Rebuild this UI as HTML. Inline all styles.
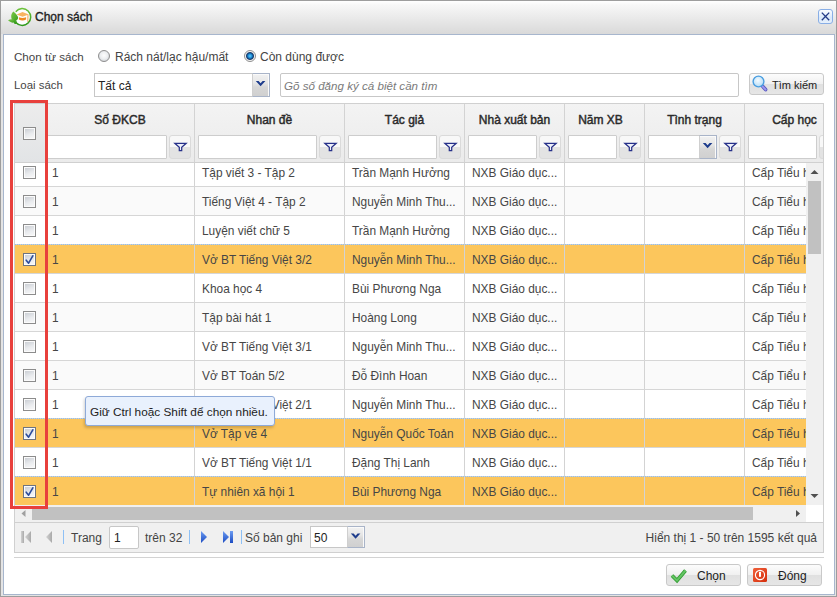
<!DOCTYPE html>
<html><head><meta charset="utf-8">
<style>
*{box-sizing:border-box;}
html,body{margin:0;padding:0;width:837px;height:597px;overflow:hidden;background:#fff;}
body{font-family:"Liberation Sans",sans-serif;font-size:12px;color:#444;position:relative;}
.a{position:absolute;}
.t{position:absolute;white-space:nowrap;line-height:14px;}
#frame{left:0;top:0;width:837px;height:597px;border:1px solid #9d9d9d;background:#e4e4e4;}
#titlebar{left:1px;top:1px;width:835px;height:33px;background:linear-gradient(#ffffff,#f7f7f7 12%,#ececec 45%,#e0e0e0 80%,#d9d9d9);}
#panel{left:3px;top:34px;width:832px;height:561px;border:1px solid #a7b6cd;background:#fff;}
.radio{position:absolute;width:13px;height:13px;border-radius:50%;border:1px solid #8c8c8c;background:radial-gradient(circle at 50% 40%,#fdfdfd,#d8dbe0 80%);}
.inp{position:absolute;border:1px solid #c7c7c7;background:#fff;border-radius:2px;}
.trig{position:absolute;border:1px solid #a9b4c8;border-left-color:#cfcfcf;background:linear-gradient(#f2f2f2,#e6e6e6 40%,#d6d6d6 60%,#d0d0d0);box-shadow:inset -1px 1px 0 #fafafa;}
.btn{position:absolute;border:1px solid #c9c9c9;border-radius:3px;background:linear-gradient(#fcfcfc,#f0f0f0 50%,#e0e0e0 51%,#e6e6e6);}
.hc{position:absolute;top:104px;height:58px;background:linear-gradient(#f3f3f3,#ebebeb);}
.hc0{background:linear-gradient(#ececec,#e2e4e6);}
.vb{width:1px;background:#d3d3d3;}
.ht{position:absolute;top:113px;text-align:center;font-weight:normal;font-size:12px;line-height:14px;color:#2a2a2a;-webkit-text-stroke:0.45px #2a2a2a;white-space:nowrap;}
.fi{position:absolute;top:135px;height:24px;border:1px solid #cdcdcd;background:#fff;border-radius:1px;}
.fbtn{position:absolute;top:135px;width:22px;height:24px;border:1px solid #dadada;border-radius:3px;background:linear-gradient(#f8f8f8 50%,#e3e3e3 50%);}
.row{position:absolute;left:0;width:791px;height:29px;border-bottom:1px solid #d6d6d6;}
.dot{height:1px;background:repeating-linear-gradient(90deg,#93bdf0 0 1px,#d7d3c0 1px 2px);}
.ct{position:absolute;white-space:nowrap;font-size:11.9px;line-height:14px;color:#464646;}
.cb{position:absolute;width:13px;height:13px;border:1px solid #8c8c8c;background:linear-gradient(160deg,#c6cad0,#e9ebee 55%,#fafafa);}
.cb:after{content:"";position:absolute;left:0;top:0;right:0;bottom:0;border:1px solid #fbfbfb;}
.ck{border-color:#6e7480;}

</style></head><body>
<div id="frame" class="a"></div>
<div id="titlebar" class="a"></div>
<svg class="a" style="left:5px;top:5px" width="30" height="24" viewBox="5 5 30 24">
  <defs>
    <linearGradient id="ring" x1="0" y1="0" x2="0" y2="1"><stop offset="0" stop-color="#6cc23a"/><stop offset="1" stop-color="#2f9a1c"/></linearGradient>
    <linearGradient id="leaf" x1="0" y1="0" x2="1" y2="1"><stop offset="0" stop-color="#7cc948"/><stop offset="1" stop-color="#3a9e1e"/></linearGradient>
  </defs>
  <path d="M15.85 11.78 A8.3 8.3 0 1 1 15.67 22.0" fill="none" stroke="url(#ring)" stroke-width="1.7"/>
  <circle cx="22.3" cy="17" r="7.4" fill="#fff" opacity="0.9"/>
  <path d="M13.4 11.4 C10.6 14.2 10.2 18.4 13.6 21.8 C16.8 20.8 18.6 18.8 18 17 C17.2 14.8 15.2 12.8 13.4 11.4Z" fill="url(#leaf)"/>
  <path d="M8 20.3 C10.5 18.6 13.5 18.8 15.8 21 C14.5 23.2 11.5 23.6 8 20.3Z" fill="url(#leaf)"/>
  <path d="M13.5 21.5 L16.5 21 L17 24 L14.5 24Z" fill="#3a9e1e"/>
  <path d="M13.5 21.5 C14.5 18.5 16.5 17.5 18 17.5 C17.5 19.5 16 21 13.5 21.8Z" fill="#4aa82a"/>
  <path d="M16.6 14.4 L22.5 12 L28.9 14.4 L22.5 16.7Z" fill="#f8b462"/>
  <path d="M18.9 17.3 Q22.5 18.8 26.1 17.3 L26.1 19.6 Q22.5 21.6 18.9 19.6Z" fill="#f08a22"/>
  <path d="M28 14.8 L27.8 21.8" stroke="#f39a40" stroke-width="0.9"/>
</svg>
<div class="t" style="left:35px;top:10px;font-size:12px;color:#1e1e1e;-webkit-text-stroke:0.35px #1e1e1e;">Chọn sách</div>
<div class="a" style="left:818px;top:9px;width:15px;height:15px;border:1px solid #88aee6;border-radius:3px;background:linear-gradient(#fbfdff,#d9e8fa 60%,#e6f0fc);"></div>
<svg class="a" style="left:818px;top:9px" width="15" height="15" viewBox="0 0 15 15"><path d="M3.8 3.6 L11.2 11.2 M11.2 3.6 L3.8 11.2" stroke="#223a86" stroke-width="1.35"/></svg>
<div id="panel" class="a"></div>
<div class="t" style="left:14px;top:50px;font-size:11.6px;">Chọn từ sách</div>
<svg class="a" style="left:98px;top:50px" width="12" height="12" viewBox="0 0 12 12"><defs><radialGradient id="rad" cx="0.5" cy="0.45" r="0.55"><stop offset="0" stop-color="#fdfdfd"/><stop offset="0.6" stop-color="#eceef0"/><stop offset="1" stop-color="#cfd2d6"/></radialGradient></defs><circle cx="6" cy="6" r="5.5" fill="url(#rad)" stroke="#8f8f8f" stroke-width="1"/></svg>
<div class="t" style="left:115px;top:50px;">Rách nát/lạc hậu/mất</div>
<svg class="a" style="left:244px;top:50px" width="12" height="12" viewBox="0 0 12 12"><defs><radialGradient id="dotg" cx="0.5" cy="0.5" r="0.5"><stop offset="0" stop-color="#6ad2ff"/><stop offset="0.55" stop-color="#1c8ad4"/><stop offset="1" stop-color="#0c3f78"/></radialGradient></defs><circle cx="6" cy="6" r="5.5" fill="#f6f6f6" stroke="#8f8f8f" stroke-width="1"/><circle cx="6" cy="6" r="3.6" fill="url(#dotg)" stroke="#173766" stroke-width="0.9"/></svg>
<div class="t" style="left:260px;top:50px;">Còn dùng được</div>
<div class="t" style="left:14px;top:78px;font-size:11.4px;">Loại sách</div>
<div class="inp" style="left:94px;top:73px;width:176px;height:24px;border-radius:0;"></div>
<div class="t" style="left:98px;top:79px;color:#222;">Tất cả</div>
<div class="trig" style="left:252px;top:73px;width:18px;height:24px;"></div>
<svg class="a" style="left:252px;top:73px" width="18" height="24"><path d="M3.8 8 L6.6 8 L8.6 10.2 L10.6 8 L13.4 8 L8.6 13.2 Z" fill="#1d3c8c"/></svg>
<div class="inp" style="left:280px;top:73px;width:459px;height:24px;"></div>
<div class="t" style="left:284px;top:79px;font-style:italic;color:#7a7a7a;font-size:11.6px;">Gõ số đăng ký cá biệt cần tìm</div>
<div class="btn" style="left:749px;top:73px;width:75px;height:22px;"></div>
<svg class="a" style="left:751px;top:74px" width="18" height="20" viewBox="0 0 18 20">
  <defs><radialGradient id="lens" cx="0.45" cy="0.4" r="0.6"><stop offset="0" stop-color="#f4fbff"/><stop offset="1" stop-color="#b5dcf6"/></radialGradient></defs>
  <path d="M11.8 12.6 L14.6 15.6" stroke="#5a58c0" stroke-width="3.6" stroke-linecap="round"/>
  <path d="M11.8 12.6 L14.6 15.6" stroke="#9a98f0" stroke-width="2" stroke-linecap="round"/>
  <circle cx="7.5" cy="7.5" r="5.4" fill="url(#lens)" stroke="#4a9ee0" stroke-width="1.4"/>
</svg>
<div class="t" style="left:772px;top:78px;color:#222;font-size:11px;">Tìm kiếm</div>
<div class="a" style="left:14px;top:103px;width:810px;height:420px;border:1px solid #d0d0d0;background:#fff;"></div>
<div class="a" style="left:0;top:0;width:823px;height:597px;overflow:hidden;">
<div class="hc hc0" style="left:15px;width:30px;"></div>
<div class="a vb" style="left:45px;top:104px;height:58px;"></div>
<div class="hc" style="left:46px;width:148px;"></div>
<div class="a vb" style="left:194px;top:104px;height:58px;"></div>
<div class="hc" style="left:195px;width:149px;"></div>
<div class="a vb" style="left:344px;top:104px;height:58px;"></div>
<div class="hc" style="left:345px;width:119px;"></div>
<div class="a vb" style="left:464px;top:104px;height:58px;"></div>
<div class="hc" style="left:465px;width:99px;"></div>
<div class="a vb" style="left:564px;top:104px;height:58px;"></div>
<div class="hc" style="left:565px;width:79px;"></div>
<div class="a vb" style="left:644px;top:104px;height:58px;"></div>
<div class="hc" style="left:645px;width:99px;"></div>
<div class="a vb" style="left:744px;top:104px;height:58px;"></div>
<div class="hc" style="left:745px;width:78px;"></div>
<div class="a" style="left:15px;top:162px;width:808px;height:1px;background:#d0d0d0;"></div>
<div class="cb" style="left:23px;top:127px;"></div>
<div class="ht" style="left:46px;width:148px;">Số ĐKCB</div>
<div class="fi" style="left:47px;width:120px;"></div>
<div class="fbtn" style="left:169px;"></div>
<svg class="a" style="left:169px;top:135px" width="22" height="24" viewBox="0 0 22 24"><path d="M5.8 8.3 H17.2 L12.7 12.3 V15.6 H10.3 V12.3 Z" fill="#eef0fa" stroke="#27318a" stroke-width="1.25" stroke-linejoin="miter"/></svg>
<div class="ht" style="left:195px;width:149px;">Nhan đề</div>
<div class="fi" style="left:198px;width:119px;"></div>
<div class="fbtn" style="left:319px;"></div>
<svg class="a" style="left:319px;top:135px" width="22" height="24" viewBox="0 0 22 24"><path d="M5.8 8.3 H17.2 L12.7 12.3 V15.6 H10.3 V12.3 Z" fill="#eef0fa" stroke="#27318a" stroke-width="1.25" stroke-linejoin="miter"/></svg>
<div class="ht" style="left:345px;width:119px;">Tác giả</div>
<div class="fi" style="left:348px;width:89px;"></div>
<div class="fbtn" style="left:439px;"></div>
<svg class="a" style="left:439px;top:135px" width="22" height="24" viewBox="0 0 22 24"><path d="M5.8 8.3 H17.2 L12.7 12.3 V15.6 H10.3 V12.3 Z" fill="#eef0fa" stroke="#27318a" stroke-width="1.25" stroke-linejoin="miter"/></svg>
<div class="ht" style="left:465px;width:99px;">Nhà xuất bản</div>
<div class="fi" style="left:468px;width:69px;"></div>
<div class="fbtn" style="left:539px;"></div>
<svg class="a" style="left:539px;top:135px" width="22" height="24" viewBox="0 0 22 24"><path d="M5.8 8.3 H17.2 L12.7 12.3 V15.6 H10.3 V12.3 Z" fill="#eef0fa" stroke="#27318a" stroke-width="1.25" stroke-linejoin="miter"/></svg>
<div class="ht" style="left:561px;width:79px;">Năm XB</div>
<div class="fi" style="left:568px;width:49px;"></div>
<div class="fbtn" style="left:619px;"></div>
<svg class="a" style="left:619px;top:135px" width="22" height="24" viewBox="0 0 22 24"><path d="M5.8 8.3 H17.2 L12.7 12.3 V15.6 H10.3 V12.3 Z" fill="#eef0fa" stroke="#27318a" stroke-width="1.25" stroke-linejoin="miter"/></svg>
<div class="ht" style="left:645px;width:99px;">Tình trạng</div>
<div class="fi" style="left:648px;width:69px;"></div>
<div class="trig" style="left:699px;top:135px;width:18px;height:24px;"></div>
<svg class="a" style="left:699px;top:135px" width="18" height="24"><path d="M3.8 8 L6.6 8 L8.6 10.2 L10.6 8 L13.4 8 L8.6 13.2 Z" fill="#1d3c8c"/></svg>
<div class="fbtn" style="left:719px;"></div>
<svg class="a" style="left:719px;top:135px" width="22" height="24" viewBox="0 0 22 24"><path d="M5.8 8.3 H17.2 L12.7 12.3 V15.6 H10.3 V12.3 Z" fill="#eef0fa" stroke="#27318a" stroke-width="1.25" stroke-linejoin="miter"/></svg>
<div class="ht" style="left:745px;width:99px;">Cấp học</div>
<div class="fi" style="left:748px;width:69px;"></div>
<div class="fbtn" style="left:819px;"></div>
<svg class="a" style="left:819px;top:135px" width="22" height="24" viewBox="0 0 22 24"><path d="M5.8 8.3 H17.2 L12.7 12.3 V15.6 H10.3 V12.3 Z" fill="#eef0fa" stroke="#27318a" stroke-width="1.25" stroke-linejoin="miter"/></svg>
</div>
<div class="a" style="left:15px;top:163px;width:791px;height:342px;overflow:hidden;">
<div class="row" style="top:-5px;background:#fff;"></div>
<div class="a vb" style="left:30px;top:-5px;height:28px;"></div>
<div class="a vb" style="left:179px;top:-5px;height:28px;"></div>
<div class="a vb" style="left:329px;top:-5px;height:28px;"></div>
<div class="a vb" style="left:449px;top:-5px;height:28px;"></div>
<div class="a vb" style="left:549px;top:-5px;height:28px;"></div>
<div class="a vb" style="left:629px;top:-5px;height:28px;"></div>
<div class="a vb" style="left:729px;top:-5px;height:28px;"></div>
<div class="a vb" style="left:829px;top:-5px;height:28px;"></div>
<div class="cb" style="left:8px;top:3px;"></div>
<div class="ct" style="left:37px;top:3px;">1</div>
<div class="ct" style="left:187px;top:3px;">Tập viết 3 - Tập 2</div>
<div class="ct" style="left:337px;top:3px;">Trần Mạnh Hưởng</div>
<div class="ct" style="left:457px;top:3px;">NXB Giáo dục...</div>
<div class="ct" style="left:737px;top:3px;">Cấp Tiểu học</div>
<div class="row" style="top:24px;background:#fafafa;"></div>
<div class="a vb" style="left:30px;top:24px;height:28px;"></div>
<div class="a vb" style="left:179px;top:24px;height:28px;"></div>
<div class="a vb" style="left:329px;top:24px;height:28px;"></div>
<div class="a vb" style="left:449px;top:24px;height:28px;"></div>
<div class="a vb" style="left:549px;top:24px;height:28px;"></div>
<div class="a vb" style="left:629px;top:24px;height:28px;"></div>
<div class="a vb" style="left:729px;top:24px;height:28px;"></div>
<div class="a vb" style="left:829px;top:24px;height:28px;"></div>
<div class="cb" style="left:8px;top:32px;"></div>
<div class="ct" style="left:37px;top:32px;">1</div>
<div class="ct" style="left:187px;top:32px;">Tiếng Việt 4 - Tập 2</div>
<div class="ct" style="left:337px;top:32px;">Nguyễn Minh Thu...</div>
<div class="ct" style="left:457px;top:32px;">NXB Giáo dục...</div>
<div class="ct" style="left:737px;top:32px;">Cấp Tiểu học</div>
<div class="row" style="top:53px;background:#fff;"></div>
<div class="a vb" style="left:30px;top:53px;height:28px;"></div>
<div class="a vb" style="left:179px;top:53px;height:28px;"></div>
<div class="a vb" style="left:329px;top:53px;height:28px;"></div>
<div class="a vb" style="left:449px;top:53px;height:28px;"></div>
<div class="a vb" style="left:549px;top:53px;height:28px;"></div>
<div class="a vb" style="left:629px;top:53px;height:28px;"></div>
<div class="a vb" style="left:729px;top:53px;height:28px;"></div>
<div class="a vb" style="left:829px;top:53px;height:28px;"></div>
<div class="cb" style="left:8px;top:61px;"></div>
<div class="ct" style="left:37px;top:61px;">1</div>
<div class="ct" style="left:187px;top:61px;">Luyện viết chữ 5</div>
<div class="ct" style="left:337px;top:61px;">Trần Mạnh Hưởng</div>
<div class="ct" style="left:457px;top:61px;">NXB Giáo dục...</div>
<div class="ct" style="left:737px;top:61px;">Cấp Tiểu học</div>
<div class="row" style="top:82px;background:#fcc65c;"></div>
<div class="a dot" style="left:0;top:81px;width:791px;"></div>
<div class="a vb" style="left:30px;top:82px;height:28px;"></div>
<div class="a vb" style="left:179px;top:82px;height:28px;"></div>
<div class="a vb" style="left:329px;top:82px;height:28px;"></div>
<div class="a vb" style="left:449px;top:82px;height:28px;"></div>
<div class="a vb" style="left:549px;top:82px;height:28px;"></div>
<div class="a vb" style="left:629px;top:82px;height:28px;"></div>
<div class="a vb" style="left:729px;top:82px;height:28px;"></div>
<div class="a vb" style="left:829px;top:82px;height:28px;"></div>
<div class="cb ck" style="left:8px;top:90px;"></div>
<svg class="a" style="left:8px;top:90px" width="13" height="13" viewBox="0 0 13 13"><path d="M3.2 7.2 L5.6 10.2 L9.8 2.8" fill="none" stroke="#2c4c9c" stroke-width="1.6" stroke-linecap="round" stroke-linejoin="round"/></svg>
<div class="ct" style="left:37px;top:90px;">1</div>
<div class="ct" style="left:187px;top:90px;">Vở BT Tiếng Việt 3/2</div>
<div class="ct" style="left:337px;top:90px;">Nguyễn Minh Thu...</div>
<div class="ct" style="left:457px;top:90px;">NXB Giáo dục...</div>
<div class="ct" style="left:737px;top:90px;">Cấp Tiểu học</div>
<div class="row" style="top:111px;background:#fff;"></div>
<div class="a vb" style="left:30px;top:111px;height:28px;"></div>
<div class="a vb" style="left:179px;top:111px;height:28px;"></div>
<div class="a vb" style="left:329px;top:111px;height:28px;"></div>
<div class="a vb" style="left:449px;top:111px;height:28px;"></div>
<div class="a vb" style="left:549px;top:111px;height:28px;"></div>
<div class="a vb" style="left:629px;top:111px;height:28px;"></div>
<div class="a vb" style="left:729px;top:111px;height:28px;"></div>
<div class="a vb" style="left:829px;top:111px;height:28px;"></div>
<div class="cb" style="left:8px;top:119px;"></div>
<div class="ct" style="left:37px;top:119px;">1</div>
<div class="ct" style="left:187px;top:119px;">Khoa học 4</div>
<div class="ct" style="left:337px;top:119px;">Bùi Phương Nga</div>
<div class="ct" style="left:457px;top:119px;">NXB Giáo dục...</div>
<div class="ct" style="left:737px;top:119px;">Cấp Tiểu học</div>
<div class="row" style="top:140px;background:#fafafa;"></div>
<div class="a vb" style="left:30px;top:140px;height:28px;"></div>
<div class="a vb" style="left:179px;top:140px;height:28px;"></div>
<div class="a vb" style="left:329px;top:140px;height:28px;"></div>
<div class="a vb" style="left:449px;top:140px;height:28px;"></div>
<div class="a vb" style="left:549px;top:140px;height:28px;"></div>
<div class="a vb" style="left:629px;top:140px;height:28px;"></div>
<div class="a vb" style="left:729px;top:140px;height:28px;"></div>
<div class="a vb" style="left:829px;top:140px;height:28px;"></div>
<div class="cb" style="left:8px;top:148px;"></div>
<div class="ct" style="left:37px;top:148px;">1</div>
<div class="ct" style="left:187px;top:148px;">Tập bài hát 1</div>
<div class="ct" style="left:337px;top:148px;">Hoàng Long</div>
<div class="ct" style="left:457px;top:148px;">NXB Giáo dục...</div>
<div class="ct" style="left:737px;top:148px;">Cấp Tiểu học</div>
<div class="row" style="top:169px;background:#fff;"></div>
<div class="a vb" style="left:30px;top:169px;height:28px;"></div>
<div class="a vb" style="left:179px;top:169px;height:28px;"></div>
<div class="a vb" style="left:329px;top:169px;height:28px;"></div>
<div class="a vb" style="left:449px;top:169px;height:28px;"></div>
<div class="a vb" style="left:549px;top:169px;height:28px;"></div>
<div class="a vb" style="left:629px;top:169px;height:28px;"></div>
<div class="a vb" style="left:729px;top:169px;height:28px;"></div>
<div class="a vb" style="left:829px;top:169px;height:28px;"></div>
<div class="cb" style="left:8px;top:177px;"></div>
<div class="ct" style="left:37px;top:177px;">1</div>
<div class="ct" style="left:187px;top:177px;">Vở BT Tiếng Việt 3/1</div>
<div class="ct" style="left:337px;top:177px;">Nguyễn Minh Thu...</div>
<div class="ct" style="left:457px;top:177px;">NXB Giáo dục...</div>
<div class="ct" style="left:737px;top:177px;">Cấp Tiểu học</div>
<div class="row" style="top:198px;background:#fafafa;"></div>
<div class="a vb" style="left:30px;top:198px;height:28px;"></div>
<div class="a vb" style="left:179px;top:198px;height:28px;"></div>
<div class="a vb" style="left:329px;top:198px;height:28px;"></div>
<div class="a vb" style="left:449px;top:198px;height:28px;"></div>
<div class="a vb" style="left:549px;top:198px;height:28px;"></div>
<div class="a vb" style="left:629px;top:198px;height:28px;"></div>
<div class="a vb" style="left:729px;top:198px;height:28px;"></div>
<div class="a vb" style="left:829px;top:198px;height:28px;"></div>
<div class="cb" style="left:8px;top:206px;"></div>
<div class="ct" style="left:37px;top:206px;">1</div>
<div class="ct" style="left:187px;top:206px;">Vở BT Toán 5/2</div>
<div class="ct" style="left:337px;top:206px;">Đỗ Đình Hoan</div>
<div class="ct" style="left:457px;top:206px;">NXB Giáo dục...</div>
<div class="ct" style="left:737px;top:206px;">Cấp Tiểu học</div>
<div class="row" style="top:227px;background:#fff;"></div>
<div class="a vb" style="left:30px;top:227px;height:28px;"></div>
<div class="a vb" style="left:179px;top:227px;height:28px;"></div>
<div class="a vb" style="left:329px;top:227px;height:28px;"></div>
<div class="a vb" style="left:449px;top:227px;height:28px;"></div>
<div class="a vb" style="left:549px;top:227px;height:28px;"></div>
<div class="a vb" style="left:629px;top:227px;height:28px;"></div>
<div class="a vb" style="left:729px;top:227px;height:28px;"></div>
<div class="a vb" style="left:829px;top:227px;height:28px;"></div>
<div class="cb" style="left:8px;top:235px;"></div>
<div class="ct" style="left:37px;top:235px;">1</div>
<div class="ct" style="left:187px;top:235px;">Vở BT Tiếng Việt 2/1</div>
<div class="ct" style="left:337px;top:235px;">Nguyễn Minh Thu...</div>
<div class="ct" style="left:457px;top:235px;">NXB Giáo dục...</div>
<div class="ct" style="left:737px;top:235px;">Cấp Tiểu học</div>
<div class="row" style="top:256px;background:#fcc65c;"></div>
<div class="a dot" style="left:0;top:255px;width:791px;"></div>
<div class="a vb" style="left:30px;top:256px;height:28px;"></div>
<div class="a vb" style="left:179px;top:256px;height:28px;"></div>
<div class="a vb" style="left:329px;top:256px;height:28px;"></div>
<div class="a vb" style="left:449px;top:256px;height:28px;"></div>
<div class="a vb" style="left:549px;top:256px;height:28px;"></div>
<div class="a vb" style="left:629px;top:256px;height:28px;"></div>
<div class="a vb" style="left:729px;top:256px;height:28px;"></div>
<div class="a vb" style="left:829px;top:256px;height:28px;"></div>
<div class="cb ck" style="left:8px;top:264px;"></div>
<svg class="a" style="left:8px;top:264px" width="13" height="13" viewBox="0 0 13 13"><path d="M3.2 7.2 L5.6 10.2 L9.8 2.8" fill="none" stroke="#2c4c9c" stroke-width="1.6" stroke-linecap="round" stroke-linejoin="round"/></svg>
<div class="ct" style="left:37px;top:264px;">1</div>
<div class="ct" style="left:187px;top:264px;">Vở Tập vẽ 4</div>
<div class="ct" style="left:337px;top:264px;">Nguyễn Quốc Toản</div>
<div class="ct" style="left:457px;top:264px;">NXB Giáo dục...</div>
<div class="ct" style="left:737px;top:264px;">Cấp Tiểu học</div>
<div class="row" style="top:285px;background:#fff;"></div>
<div class="a vb" style="left:30px;top:285px;height:28px;"></div>
<div class="a vb" style="left:179px;top:285px;height:28px;"></div>
<div class="a vb" style="left:329px;top:285px;height:28px;"></div>
<div class="a vb" style="left:449px;top:285px;height:28px;"></div>
<div class="a vb" style="left:549px;top:285px;height:28px;"></div>
<div class="a vb" style="left:629px;top:285px;height:28px;"></div>
<div class="a vb" style="left:729px;top:285px;height:28px;"></div>
<div class="a vb" style="left:829px;top:285px;height:28px;"></div>
<div class="cb" style="left:8px;top:293px;"></div>
<div class="ct" style="left:37px;top:293px;">1</div>
<div class="ct" style="left:187px;top:293px;">Vở BT Tiếng Việt 1/1</div>
<div class="ct" style="left:337px;top:293px;">Đặng Thị Lanh</div>
<div class="ct" style="left:457px;top:293px;">NXB Giáo dục...</div>
<div class="ct" style="left:737px;top:293px;">Cấp Tiểu học</div>
<div class="row" style="top:314px;background:#fcc65c;"></div>
<div class="a dot" style="left:0;top:313px;width:791px;"></div>
<div class="a vb" style="left:30px;top:314px;height:28px;"></div>
<div class="a vb" style="left:179px;top:314px;height:28px;"></div>
<div class="a vb" style="left:329px;top:314px;height:28px;"></div>
<div class="a vb" style="left:449px;top:314px;height:28px;"></div>
<div class="a vb" style="left:549px;top:314px;height:28px;"></div>
<div class="a vb" style="left:629px;top:314px;height:28px;"></div>
<div class="a vb" style="left:729px;top:314px;height:28px;"></div>
<div class="a vb" style="left:829px;top:314px;height:28px;"></div>
<div class="cb ck" style="left:8px;top:322px;"></div>
<svg class="a" style="left:8px;top:322px" width="13" height="13" viewBox="0 0 13 13"><path d="M3.2 7.2 L5.6 10.2 L9.8 2.8" fill="none" stroke="#2c4c9c" stroke-width="1.6" stroke-linecap="round" stroke-linejoin="round"/></svg>
<div class="ct" style="left:37px;top:322px;">1</div>
<div class="ct" style="left:187px;top:322px;">Tự nhiên xã hội 1</div>
<div class="ct" style="left:337px;top:322px;">Bùi Phương Nga</div>
<div class="ct" style="left:457px;top:322px;">NXB Giáo dục...</div>
<div class="ct" style="left:737px;top:322px;">Cấp Tiểu học</div>
</div>
<div class="a" style="left:806px;top:163px;width:17px;height:342px;background:#f0f0f0;"></div>
<div class="a" style="left:808px;top:181px;width:13px;height:73px;background:#c1c1c1;"></div>
<svg class="a" style="left:806px;top:163px" width="17" height="17"><path d="M4.5 11 L8.5 7 L12.5 11Z" fill="#505050"/></svg>
<svg class="a" style="left:806px;top:488px" width="17" height="17"><path d="M4.5 6 L8.5 10 L12.5 6Z" fill="#505050"/></svg>
<div class="a" style="left:15px;top:505px;width:791px;height:17px;background:#f0f0f0;"></div>
<div class="a" style="left:32px;top:507px;width:721px;height:13px;background:#c1c1c1;"></div>
<svg class="a" style="left:15px;top:505px" width="17" height="17"><path d="M10.5 5 L6.5 8.5 L10.5 12Z" fill="#a0a0a0"/></svg>
<svg class="a" style="left:789px;top:505px" width="17" height="17"><path d="M7 5 L11 8.5 L7 12Z" fill="#505050"/></svg>
<div class="a" style="left:806px;top:505px;width:17px;height:17px;background:#fff;"></div>
<div class="a" style="left:14px;top:522px;width:810px;height:31px;border:1px solid #d0d0d0;background:#f0f0f0;"></div>
<svg class="a" style="left:14px;top:522px" width="240" height="31" viewBox="0 0 240 31">
  <defs>
    <linearGradient id="gg" x1="0" y1="0" x2="1" y2="0"><stop offset="0" stop-color="#d2d2d2"/><stop offset="1" stop-color="#a9a9a9"/></linearGradient>
    <linearGradient id="bg" x1="0" y1="0" x2="0" y2="1"><stop offset="0" stop-color="#6d9cf2"/><stop offset="1" stop-color="#1c4cc2"/></linearGradient>
  </defs>
  <rect x="7" y="9" width="3" height="12" fill="url(#gg)"/>
  <path d="M17 9 L11 15 L17 21Z" fill="url(#gg)"/>
  <path d="M38 9 L32 15 L38 21Z" fill="url(#gg)"/>
  <rect x="49" y="8" width="1" height="14" fill="#8ec0f5"/>
  <rect x="175" y="8" width="1" height="14" fill="#8ec0f5"/>
  <path d="M187 9 L193 15 L187 21Z" fill="url(#bg)"/>
  <path d="M209 9 L215 15 L209 21Z" fill="url(#bg)"/>
  <rect x="216" y="9" width="3" height="12" fill="url(#bg)"/>
  <rect x="227" y="8" width="1" height="14" fill="#8ec0f5"/>
</svg>
<div class="t" style="left:71px;top:531px;">Trang</div>
<div class="inp" style="left:109px;top:526px;width:30px;height:23px;border-radius:2px;"></div>
<div class="t" style="left:114px;top:531px;color:#222;">1</div>
<div class="t" style="left:145px;top:531px;">trên 32</div>
<div class="t" style="left:245px;top:531px;">Số bản ghi</div>
<div class="inp" style="left:310px;top:526px;width:55px;height:22px;border-radius:0;"></div>
<div class="t" style="left:314px;top:531px;color:#222;">50</div>
<div class="trig" style="left:347px;top:526px;width:18px;height:22px;"></div>
<svg class="a" style="left:347px;top:526px" width="18" height="22"><path d="M3.8 7.5 L6.6 7.5 L8.6 9.7 L10.6 7.5 L13.4 7.5 L8.6 12.7 Z" fill="#1d3c8c"/></svg>
<div class="t" style="left:580px;top:531px;width:237px;text-align:right;">Hiển thị 1 - 50 trên 1595 kết quả</div>
<div class="a" style="left:14px;top:557px;width:810px;height:1px;background:#d3d3d3;"></div>
<div class="btn" style="left:666px;top:564px;width:75px;height:22px;"></div>
<svg class="a" style="left:668px;top:566px" width="20" height="18" viewBox="0 0 20 18"><path d="M4 9.5 L9 14.5 L17.5 4.5" fill="none" stroke="#2f9a2f" stroke-width="3.6" stroke-linejoin="miter"/><path d="M4 9.5 L9 14.5 L17.5 4.5" fill="none" stroke="#63c463" stroke-width="2"/></svg>
<div class="t" style="left:697px;top:569px;color:#222;">Chọn</div>
<div class="btn" style="left:747px;top:564px;width:75px;height:22px;"></div>
<svg class="a" style="left:753px;top:568px" width="14" height="14" viewBox="0 0 14 14">
  <defs><linearGradient id="rg" x1="0" y1="0" x2="1" y2="1"><stop offset="0" stop-color="#f0603a"/><stop offset="1" stop-color="#d52e0c"/></linearGradient></defs>
  <rect x="0" y="0" width="14" height="14" rx="1.5" fill="url(#rg)"/>
  <circle cx="7" cy="7" r="4.6" fill="none" stroke="#fff" stroke-width="1.1"/>
  <rect x="6" y="3.8" width="2" height="5" fill="#fff"/>
</svg>
<div class="t" style="left:778px;top:569px;color:#222;">Đóng</div>
<!-- tooltip -->
<div class="a" style="left:85px;top:396px;width:190px;height:30px;border:1px solid #8eaad8;border-radius:3px;background:#e9f1fd;box-shadow:-1px 2px 3px rgba(0,0,0,0.18);"></div>
<div class="t" style="left:90px;top:405px;color:#222;font-size:11.8px;">Giữ Ctrl hoặc Shift để chọn nhiều.</div>
<!-- red highlight -->
<div class="a" style="left:10px;top:100px;width:38px;height:409px;border:3px solid #e8403c;"></div>
</body></html>
